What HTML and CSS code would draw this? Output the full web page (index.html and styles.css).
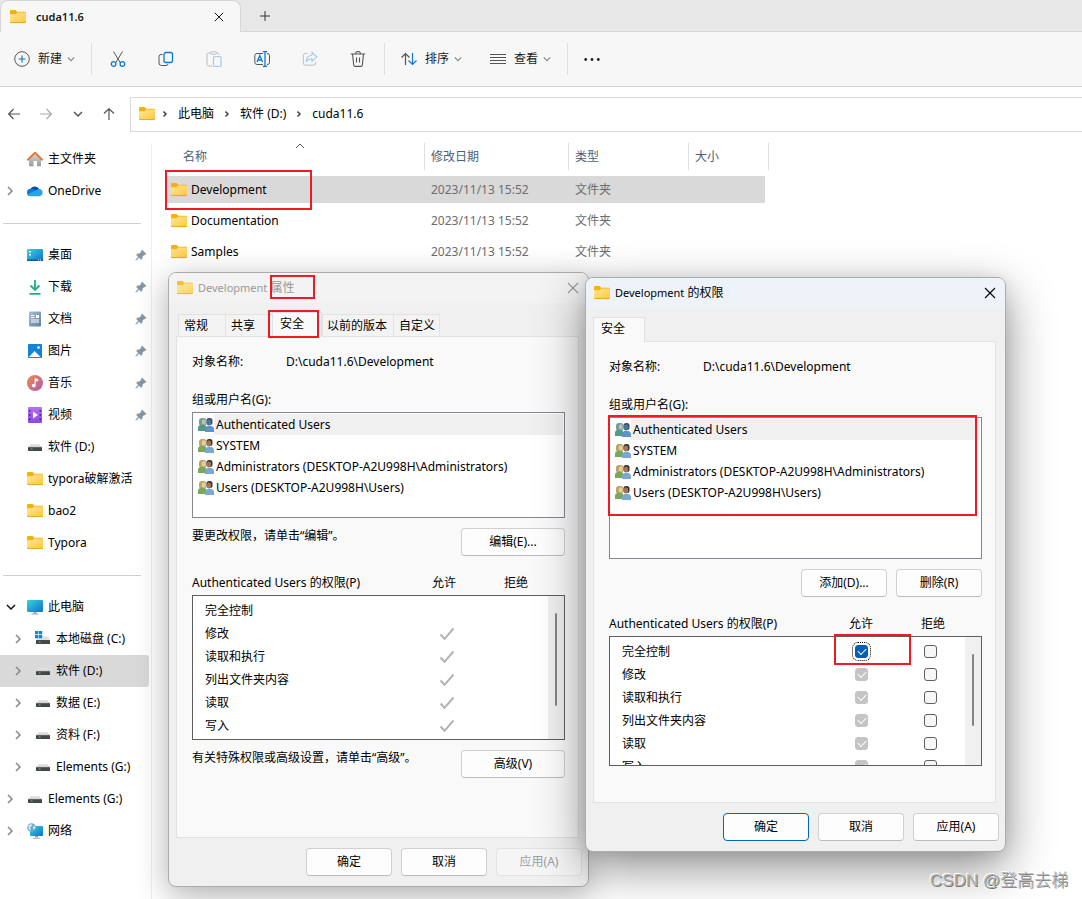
FILE: index.html
```html
<!DOCTYPE html>
<html lang="zh-CN">
<head>
<meta charset="utf-8">
<meta name="viewport" content="width=device-width, initial-scale=1">
<title>cuda11.6</title>
<link rel="stylesheet" href="styles.css">
</head>
<body>
<svg class="sprite" aria-hidden="true">
  <defs>
    <linearGradient id="gFolder" x1="0" y1="0" x2="1" y2="1"><stop offset="0" stop-color="#ffe69a"/><stop offset="1" stop-color="#fdc83c"/></linearGradient>
    <linearGradient id="gScreen" x1="0" y1="0" x2="1" y2="1"><stop offset="0" stop-color="#36d4dc"/><stop offset="1" stop-color="#1170cc"/></linearGradient>
    <linearGradient id="gDoc" x1="0" y1="0" x2="1" y2="1"><stop offset="0" stop-color="#a9bfd8"/><stop offset="1" stop-color="#5f80a3"/></linearGradient>
    <linearGradient id="gMusic" x1="0" y1="0" x2="1" y2="1"><stop offset="0" stop-color="#ee8a4c"/><stop offset="1" stop-color="#b35daa"/></linearGradient>
    <linearGradient id="gVideo" x1="0" y1="0" x2="0" y2="1"><stop offset="0" stop-color="#b672f5"/><stop offset="1" stop-color="#8a48e0"/></linearGradient>
    <linearGradient id="gHome" x1="0" y1="0" x2="0" y2="1"><stop offset="0" stop-color="#dadada"/><stop offset="1" stop-color="#9b9b9b"/></linearGradient>
  </defs>
  <symbol id="folder" viewBox="0 0 16 16">
    <path d="M0 2a1 1 0 0 1 1-1h4.600l1.600 1.800H15a1 1 0 0 1 1 1V7H0z" fill="#f5b010"/>
    <path d="M0 5.200h5.600l1.600-1.600h8a.8.8 0 0 1 .8.8v8.600a1 1 0 0 1-1 1H1a1 1 0 0 1-1-1z" fill="url(#gFolder)"/>
    <path d="M.2 12.900c.2.500.5.700 1 .7h13.600c.5 0 .8-.2 1-.7" fill="none" stroke="#e4a11c" stroke-width=".9"/>
  </symbol>
  <symbol id="chev-r" viewBox="0 0 8 10"><path d="M2 1l4 4-4 4" fill="none" stroke="currentColor" stroke-width="1.500"/></symbol>
  <symbol id="crumb" viewBox="0 0 8 10"><path d="M2.500 2.500L5 5 2.500 7.500" fill="none" stroke="currentColor" stroke-width="1.500"/></symbol>
  <symbol id="chev-d" viewBox="0 0 10 8"><path d="M1 2l4 4 4-4" fill="none" stroke="currentColor" stroke-width="1.500"/></symbol>
  <symbol id="cross" viewBox="0 0 12 12"><path d="M1 1l10 10M11 1L1 11" stroke="currentColor" stroke-width="1.100" fill="none"/></symbol>
  <symbol id="home" viewBox="0 0 16 16">
    <path d="M2 7.500L8 2l6 5.500V15.200H10V10H6.500v5.200H2z" fill="url(#gHome)"/>
    <path d="M.8 8.700L8 1.800l7.200 6.900" fill="none" stroke="#e8762c" stroke-width="1.900" stroke-linecap="round" stroke-linejoin="round"/>
  </symbol>
  <symbol id="cloud" viewBox="0 0 16 16">
    <path d="M3.200 6.500A5 5 0 0 1 12.200 6L8 10z" fill="#0a4faf"/>
    <path d="M3.600 5.800c1.400-.4 3 0 4.400 1l5.500 6.200H3.600A3.600 3.600 0 0 1 3.600 5.800z" fill="#0f78d6"/>
    <path d="M12.200 5.900A3.700 3.700 0 0 1 12.700 13.200H3.600c-1.300 0-2.400-.6-3-1.600L9 7.300c.8-.8 2-1.500 3.200-1.400z" fill="#27a4ea"/>
  </symbol>
  <symbol id="desktop" viewBox="0 0 16 16">
    <rect y="2" width="16" height="12" rx="1" fill="url(#gScreen)"/>
    <path d="M2 4h2v1.500H2zM2 7h2v1.500H2z" fill="#fff"/><path d="M0 12.500h16V14H0z" fill="#0c5aa0"/><path d="M11 13h1M13 13h1" stroke="#fff"/>
  </symbol>
  <symbol id="download" viewBox="0 0 16 16"><path d="M8 1v9.500M3.500 6.500L8 11l4.500-4.500M2.500 14.800h11" fill="none" stroke="#1fae86" stroke-width="1.800"/></symbol>
  <symbol id="doc" viewBox="0 0 16 16">
    <rect x="2" y=".5" width="12" height="15" rx="1" fill="url(#gDoc)"/>
    <path d="M4 4.500h3.500M4 6.500h3.500M4 9h8M4 11h8" stroke="#fff" stroke-width="1"/><path d="M9 4h3v3H9z" fill="#fff"/>
  </symbol>
  <symbol id="picture" viewBox="0 0 16 16">
    <rect x="1" y="1" width="14" height="14" rx="1" fill="#1583d3"/><path d="M2 14l5.500-6 6 6z" fill="#fff"/><circle cx="11.500" cy="4.500" r="1.300" fill="#fff"/>
  </symbol>
  <symbol id="music" viewBox="0 0 16 16">
    <circle cx="8" cy="8" r="8" fill="url(#gMusic)"/><path d="M8 10.500V3.500l2.800 1v1.500L8.800 5.500" fill="#fff" stroke="#fff" stroke-width=".8"/><circle cx="6.800" cy="10.600" r="1.900" fill="#fff"/>
  </symbol>
  <symbol id="video" viewBox="0 0 16 16">
    <rect x="1" y="0" width="14" height="16" rx="1" fill="url(#gVideo)"/><path d="M6 4.500l5 3.500-5 3.500z" fill="#fff"/>
    <path d="M2 3h1.500v1.500H2zM2 7.200h1.500v1.500H2zM2 11.500h1.500V13H2zM12.500 3H14v1.500h-1.500zM12.500 7.200H14v1.500h-1.500zM12.500 11.500H14V13h-1.500z" fill="#43207f"/>
  </symbol>
  <symbol id="drive" viewBox="0 0 16 16">
    <path d="M3.500 5h9l2.500 3.500H1z" fill="#e1e1e4"/><rect x="1" y="8" width="14" height="4" rx=".5" fill="#45484b"/><path d="M1 8.300h14" stroke="#77797c" stroke-width=".7"/><rect x="4" y="9.500" width="1.500" height="1" fill="#4fe34f"/>
  </symbol>
  <symbol id="windrive" viewBox="0 0 16 16">
    <path d="M4 5.500h9.500L15 9H1z" fill="#e1e1e4"/><rect x="1" y="9" width="14" height="4" rx=".5" fill="#45484b"/><rect x="4" y="10.500" width="1.500" height="1" fill="#4fe34f"/>
    <path d="M0 0h3.300v3.300H0zM3.900 0h3.300v3.300H3.900zM0 3.900h3.300v3.300H0zM3.900 3.900h3.300v3.300H3.900z" fill="#1483d8"/>
  </symbol>
  <symbol id="pc" viewBox="0 0 16 16">
    <rect y="1" width="16" height="12" rx="1" fill="url(#gScreen)"/><path d="M6.500 13h3v1.500h-3z" fill="#8fa5b5"/><path d="M4.500 15h7" stroke="#9dafbb" stroke-width="1.200"/>
  </symbol>
  <symbol id="network" viewBox="0 0 16 16">
    <rect x="3" y="3" width="13" height="10" rx="1" fill="url(#gScreen)"/><path d="M8 13h3v1.500H8z" fill="#8fa5b5"/><path d="M6 15.200h7" stroke="#9dafbb"/>
    <circle cx="4.500" cy="4.500" r="4.300" fill="#6fabd0"/><path d="M1.500 2.500Q4 .5 5.500 2L3 4.500l1 3L1.500 6zM6 4l2-1 .5 2-2 1.500z" fill="#d8edf5"/>
  </symbol>
  <symbol id="pin" viewBox="0 0 12 12"><path d="M7.200 1l3.900 3.900-1 .7-1.200.3L7.300 7.600l-.2 1.900-1 .9-2-2L1.300 11.200.8 10.700l2.700-2.800-2-2 .9-1 2-.2L6.200 3l.3-1.200z" fill="#8697a3" stroke="#8697a3" stroke-width=".6"/></symbol>
  <symbol id="users-g" viewBox="0 0 16 16">
    <rect x="1" y="1" width="7.500" height="8" rx="3" fill="#7c9494"/><ellipse cx="5.800" cy="5" rx="2.100" ry="2.800" fill="#b3c2bb"/><path d="M0 14V11c0-2.200 1.500-3.300 4.500-3.300S9 9.500 9 14z" fill="#4f9b85"/>
    <rect x="8.500" y="1" width="6" height="7" rx="2.500" fill="#3c4f68"/><ellipse cx="11" cy="5.500" rx="2.200" ry="2.900" fill="#49769b"/><path d="M7 15V12.500c0-2.500 1.500-3.700 4.500-3.700S16 10 16 12.500V15z" fill="#5c93cd"/>
  </symbol>
  <symbol id="users" viewBox="0 0 16 16">
    <rect x="1" y="1" width="7.500" height="8" rx="3" fill="#b5a565"/><ellipse cx="5.800" cy="5" rx="2.100" ry="2.800" fill="#efcaa1"/><path d="M0 14V11c0-2.200 1.500-3.300 4.500-3.300S9 9.500 9 14z" fill="#79a75b"/>
    <rect x="8.500" y="1" width="6" height="7" rx="2.500" fill="#39322e"/><ellipse cx="11" cy="5.500" rx="2.200" ry="2.900" fill="#a47753"/><path d="M7 15V12.500c0-2.500 1.500-3.700 4.500-3.700S16 10 16 12.500V15z" fill="#7ba7d6"/>
  </symbol>
  <symbol id="tick" viewBox="0 0 16 14"><path d="M1.500 7.500l4 4.300L14.500 1.500" fill="none" stroke="#b2b2b2" stroke-width="2"/></symbol>
</svg>

<div class="explorer">
  <header class="tabbar">
    <div class="tab">
      <svg class="i16"><use href="#folder"/></svg>
      <span class="tab-name">cuda11.6</span>
      <button class="plain tab-close" aria-label="关闭标签页"><svg class="i10"><use href="#cross"/></svg></button>
    </div>
    <button class="plain tab-new" aria-label="新建标签页"><svg class="i12" viewBox="0 0 12 12"><path d="M6 1v10M1 6h10" stroke="#333" fill="none"/></svg></button>
  </header>

  <div class="toolbar">
    <button class="plain cmd"><svg class="i16" viewBox="0 0 16 16"><circle cx="8" cy="8" r="7.300" fill="none" stroke="#555"/><path d="M8 4.500v7M4.500 8h7" stroke="#0f78d4" stroke-width="1.200"/></svg><span>新建</span><svg class="i8"><use href="#chev-d"/></svg></button>
    <span class="sep"></span>
    <div class="tools">
      <button class="plain tool" aria-label="剪切"><svg class="i16" viewBox="0 0 16 16"><path d="M3.500.5L10.500 12M12.500.5L5.500 12" stroke="#555" fill="none"/><g fill="none" stroke="#0f78d4" stroke-width="1.300"><circle cx="3.600" cy="13" r="2.300"/><circle cx="12.400" cy="13" r="2.300"/></g></svg></button>
      <button class="plain tool" aria-label="复制"><svg class="i16" viewBox="0 0 16 16"><path d="M4.500 3.500H3A2 2 0 0 0 1 5.500V12a2.500 2.500 0 0 0 2.500 2.500H8a2 2 0 0 0 2-1.500" fill="none" stroke="#555"/><rect x="6" y="1.500" width="8.500" height="10" rx="2" fill="none" stroke="#0f78d4" stroke-width="1.300"/></svg></button>
      <button class="plain tool" aria-label="粘贴"><svg class="i16" viewBox="0 0 16 16"><path d="M5 2H2.500A1.500 1.500 0 0 0 1 3.500v10A1.500 1.500 0 0 0 2.500 15H6M10.500 2h1A1.500 1.500 0 0 1 13 3.500V4" fill="none" stroke="#bdbdbd"/><rect x="4.500" y=".8" width="6" height="2.400" rx="1" fill="none" stroke="#bdbdbd"/><rect x="7.500" y="5.500" width="7.500" height="10" rx="1.200" fill="none" stroke="#9ccbf0" stroke-width="1.200"/></svg></button>
      <button class="plain tool" aria-label="重命名"><svg class="i16" viewBox="0 0 16 16"><path d="M9 2.500H3a2.200 2.200 0 0 0-2.200 2.200v6.600A2.200 2.200 0 0 0 3 13.500h6M13 2.500a2.200 2.200 0 0 1 2.500 2.200v6.600a2.200 2.200 0 0 1-2.500 2.200" fill="none" stroke="#555"/><path d="M3 11l2.800-6.500L8.500 11M4 9h3.700M11 .5v15M8.800.5h4.400M8.800 15.500h4.400" fill="none" stroke="#0f78d4" stroke-width="1.300"/></svg></button>
      <button class="plain tool" aria-label="共享"><svg class="i16" viewBox="0 0 16 16"><path d="M5.500 2.500H3.500A2.200 2.200 0 0 0 1.300 4.700V12a2.200 2.200 0 0 0 2.200 2.200h8a2.200 2.200 0 0 0 2.200-2.200v-1" fill="none" stroke="#bdbdbd"/><path d="M10 1.500l5 4.300-5 4.500V7.700C7.500 7.600 6 8.500 4.300 10.500 4.700 6.700 6.700 4.300 10 4z" fill="none" stroke="#9ccbf0" stroke-width="1.100"/></svg></button>
      <button class="plain tool" aria-label="删除"><svg class="i16" viewBox="0 0 16 16"><path d="M.8 3h14.400M5.500 3a2.500 2.500 0 0 1 5 0M2.500 3l1.200 11a1.500 1.500 0 0 0 1.500 1.400h5.600a1.500 1.500 0 0 0 1.500-1.400l1.200-11M6.500 6.500v5M9.500 6.500v5" fill="none" stroke="#555" stroke-width="1.100"/></svg></button>
    </div>
    <span class="sep"></span>
    <button class="plain cmd sort"><svg class="i16" viewBox="0 0 16 16"><path d="M4.500 14V2.500M.5 6.500l4-4 4 4" fill="none" stroke="#555" stroke-width="1.200"/><path d="M11.500 2v11.500M7.500 9.500l4 4 4-4" fill="none" stroke="#0f78d4" stroke-width="1.200"/></svg><span>排序</span><svg class="i8"><use href="#chev-d"/></svg></button>
    <button class="plain cmd"><svg class="i16" viewBox="0 0 16 16"><path d="M0 3.500h16M0 6.500h16M0 9.500h16M0 12.500h16" stroke="#555"/></svg><span>查看</span><svg class="i8"><use href="#chev-d"/></svg></button>
    <span class="sep"></span>
    <button class="plain more" aria-label="更多"><svg class="i16" viewBox="0 0 16 16"><g fill="#222"><circle cx="1.700" cy="8.500" r="1.400"/><circle cx="8" cy="8.500" r="1.400"/><circle cx="14.300" cy="8.500" r="1.400"/></g></svg></button>
  </div>

  <div class="address">
    <div class="history">
      <button class="plain" aria-label="后退"><svg class="i12" viewBox="0 0 12 12"><path d="M12 6H.8M5.500 1L.7 6l4.800 5" fill="none" stroke="#555" stroke-width="1.200"/></svg></button>
      <button class="plain" aria-label="前进"><svg class="i12" viewBox="0 0 12 12"><path d="M0 6h11.200M6.500 1l4.800 5-4.800 5" fill="none" stroke="#aaa" stroke-width="1.200"/></svg></button>
      <button class="plain" aria-label="最近"><svg class="i10"><use href="#chev-d"/></svg></button>
      <button class="plain" aria-label="向上"><svg class="i12" viewBox="0 0 12 12"><path d="M6 12V.8M1 5.500L6 .7l5 4.800" fill="none" stroke="#555" stroke-width="1.200"/></svg></button>
    </div>
    <nav class="crumbs" aria-label="路径">
      <svg class="i16"><use href="#folder"/></svg>
      <svg class="i8"><use href="#crumb"/></svg><a href="#">此电脑</a>
      <svg class="i8"><use href="#crumb"/></svg><a href="#">软件 (D:)</a>
      <svg class="i8"><use href="#crumb"/></svg><a href="#">cuda11.6</a>
    </nav>
  </div>

  <div class="main">
    <nav class="sidebar" aria-label="导航窗格">
      <a class="item" href="#"><span class="arrow"></span><svg class="i16"><use href="#home"/></svg><span>主文件夹</span></a>
      <a class="item" href="#"><span class="arrow"><svg class="i8"><use href="#chev-r"/></svg></span><svg class="i16"><use href="#cloud"/></svg><span>OneDrive</span></a>
      <hr>
      <a class="item" href="#"><span class="arrow"></span><svg class="i16"><use href="#desktop"/></svg><span>桌面</span><svg class="pin"><use href="#pin"/></svg></a>
      <a class="item" href="#"><span class="arrow"></span><svg class="i16"><use href="#download"/></svg><span>下载</span><svg class="pin"><use href="#pin"/></svg></a>
      <a class="item" href="#"><span class="arrow"></span><svg class="i16"><use href="#doc"/></svg><span>文档</span><svg class="pin"><use href="#pin"/></svg></a>
      <a class="item" href="#"><span class="arrow"></span><svg class="i16"><use href="#picture"/></svg><span>图片</span><svg class="pin"><use href="#pin"/></svg></a>
      <a class="item" href="#"><span class="arrow"></span><svg class="i16"><use href="#music"/></svg><span>音乐</span><svg class="pin"><use href="#pin"/></svg></a>
      <a class="item" href="#"><span class="arrow"></span><svg class="i16"><use href="#video"/></svg><span>视频</span><svg class="pin"><use href="#pin"/></svg></a>
      <a class="item" href="#"><span class="arrow"></span><svg class="i16"><use href="#drive"/></svg><span>软件 (D:)</span></a>
      <a class="item" href="#"><span class="arrow"></span><svg class="i16"><use href="#folder"/></svg><span>typora破解激活</span></a>
      <a class="item" href="#"><span class="arrow"></span><svg class="i16"><use href="#folder"/></svg><span>bao2</span></a>
      <a class="item" href="#"><span class="arrow"></span><svg class="i16"><use href="#folder"/></svg><span>Typora</span></a>
      <hr>
      <a class="item open" href="#"><span class="arrow"><svg class="i10"><use href="#chev-d"/></svg></span><svg class="i16"><use href="#pc"/></svg><span>此电脑</span></a>
      <a class="item sub" href="#"><span class="arrow"><svg class="i8"><use href="#chev-r"/></svg></span><svg class="i16"><use href="#windrive"/></svg><span>本地磁盘 (C:)</span></a>
      <a class="item sub selected" href="#"><span class="arrow"><svg class="i8"><use href="#chev-r"/></svg></span><svg class="i16"><use href="#drive"/></svg><span>软件 (D:)</span></a>
      <a class="item sub" href="#"><span class="arrow"><svg class="i8"><use href="#chev-r"/></svg></span><svg class="i16"><use href="#drive"/></svg><span>数据 (E:)</span></a>
      <a class="item sub" href="#"><span class="arrow"><svg class="i8"><use href="#chev-r"/></svg></span><svg class="i16"><use href="#drive"/></svg><span>资料 (F:)</span></a>
      <a class="item sub" href="#"><span class="arrow"><svg class="i8"><use href="#chev-r"/></svg></span><svg class="i16"><use href="#drive"/></svg><span>Elements (G:)</span></a>
      <a class="item" href="#"><span class="arrow"><svg class="i8"><use href="#chev-r"/></svg></span><svg class="i16"><use href="#drive"/></svg><span>Elements (G:)</span></a>
      <a class="item" href="#"><span class="arrow"><svg class="i8"><use href="#chev-r"/></svg></span><svg class="i16"><use href="#network"/></svg><span>网络</span></a>
    </nav>

    <main class="files">
      <table class="filelist">
        <thead>
          <tr><th class="c-name"><span>名称</span><svg class="sort-mark" viewBox="0 0 10 6"><path d="M1 5l4-4 4 4" fill="none" stroke="#555"/></svg></th><th class="c-date"><span>修改日期</span></th><th class="c-type"><span>类型</span></th><th class="c-size"><span>大小</span></th></tr>
        </thead>
        <tbody>
          <tr class="selected"><td><div class="fname"><svg class="i16"><use href="#folder"/></svg>Development</div></td><td>2023/11/13 15:52</td><td>文件夹</td><td></td></tr>
          <tr><td><div class="fname"><svg class="i16"><use href="#folder"/></svg>Documentation</div></td><td>2023/11/13 15:52</td><td>文件夹</td><td></td></tr>
          <tr><td><div class="fname"><svg class="i16"><use href="#folder"/></svg>Samples</div></td><td>2023/11/13 15:52</td><td>文件夹</td><td></td></tr>
        </tbody>
      </table>
      <span class="mark mark-file"></span>
    </main>
  </div>
</div>

<section class="dialog props" role="dialog" aria-label="Development 属性">
  <header class="titlebar"><svg class="i16"><use href="#folder"/></svg><h2><span class="latin">Development</span> 属性</h2><button class="plain" aria-label="关闭"><svg class="i12"><use href="#cross"/></svg></button></header>
  <div class="tabs">
    <button>常规</button><button>共享</button><button class="active">安全</button><button class="wide">以前的版本</button><button class="last">自定义</button>
  </div>
  <div class="panel">
    <div class="object"><span>对象名称:</span><span>D:\cuda11.6\Development</span></div>
    <p class="list-label">组或用户名(G):</p>
    <ul class="users">
      <li class="current"><svg class="i16"><use href="#users-g"/></svg><span>Authenticated Users</span></li>
      <li><svg class="i16"><use href="#users"/></svg><span>SYSTEM</span></li>
      <li><svg class="i16"><use href="#users"/></svg><span>Administrators (DESKTOP-A2U998H\Administrators)</span></li>
      <li><svg class="i16"><use href="#users"/></svg><span>Users (DESKTOP-A2U998H\Users)</span></li>
    </ul>
    <div class="note"><p>要更改权限，请单击“编辑”。</p><button class="btn long">编辑(E)...</button></div>
    <div class="perm-head"><span>Authenticated Users 的权限(P)</span><span>允许</span><span>拒绝</span></div>
    <div class="perm-box">
      <table class="perms">
        <tbody>
          <tr><th>完全控制</th><td></td><td></td></tr>
          <tr><th>修改</th><td><svg class="tick"><use href="#tick"/></svg></td><td></td></tr>
          <tr><th>读取和执行</th><td><svg class="tick"><use href="#tick"/></svg></td><td></td></tr>
          <tr><th>列出文件夹内容</th><td><svg class="tick"><use href="#tick"/></svg></td><td></td></tr>
          <tr><th>读取</th><td><svg class="tick"><use href="#tick"/></svg></td><td></td></tr>
          <tr><th>写入</th><td><svg class="tick"><use href="#tick"/></svg></td><td></td></tr>
        </tbody>
      </table>
      <div class="scroll"><span class="thumb"></span></div>
    </div>
    <div class="note"><p>有关特殊权限或高级设置，请单击“高级”。</p><button class="btn long">高级(V)</button></div>
  </div>
  <footer class="actions"><button class="btn">确定</button><button class="btn">取消</button><button class="btn" disabled>应用(A)</button></footer>
  <span class="mark mark-title"></span>
  <span class="mark mark-tab"></span>
</section>

<section class="dialog acl" role="dialog" aria-label="Development 的权限">
  <header class="titlebar"><svg class="i16"><use href="#folder"/></svg><h2><span class="latin">Development</span> 的权限</h2><button class="plain" aria-label="关闭"><svg class="i12"><use href="#cross"/></svg></button></header>
  <div class="tabs"><button class="active">安全</button></div>
  <div class="panel">
    <div class="object"><span>对象名称:</span><span>D:\cuda11.6\Development</span></div>
    <p class="list-label">组或用户名(G):</p>
    <ul class="users">
      <li class="current"><svg class="i16"><use href="#users-g"/></svg><span>Authenticated Users</span></li>
      <li><svg class="i16"><use href="#users"/></svg><span>SYSTEM</span></li>
      <li><svg class="i16"><use href="#users"/></svg><span>Administrators (DESKTOP-A2U998H\Administrators)</span></li>
      <li><svg class="i16"><use href="#users"/></svg><span>Users (DESKTOP-A2U998H\Users)</span></li>
    </ul>
    <div class="note edit"><button class="btn">添加(D)...</button><button class="btn">删除(R)</button></div>
    <div class="perm-head"><span>Authenticated Users 的权限(P)</span><span>允许</span><span>拒绝</span></div>
    <div class="perm-box">
      <table class="perms">
        <tbody>
          <tr><th>完全控制</th><td><input class="focused" type="checkbox" aria-label="完全控制 允许" checked></td><td><input type="checkbox" aria-label="完全控制 拒绝"></td></tr>
          <tr><th>修改</th><td><input type="checkbox" aria-label="修改 允许" checked disabled></td><td><input type="checkbox" aria-label="修改 拒绝"></td></tr>
          <tr><th>读取和执行</th><td><input type="checkbox" aria-label="读取和执行 允许" checked disabled></td><td><input type="checkbox" aria-label="读取和执行 拒绝"></td></tr>
          <tr><th>列出文件夹内容</th><td><input type="checkbox" aria-label="列出文件夹内容 允许" checked disabled></td><td><input type="checkbox" aria-label="列出文件夹内容 拒绝"></td></tr>
          <tr><th>读取</th><td><input type="checkbox" aria-label="读取 允许" checked disabled></td><td><input type="checkbox" aria-label="读取 拒绝"></td></tr>
          <tr><th>写入</th><td><input type="checkbox" aria-label="写入 允许" checked disabled></td><td><input type="checkbox" aria-label="写入 拒绝"></td></tr>
        </tbody>
      </table>
      <div class="scroll"><span class="thumb"></span></div>
    </div>
  </div>
  <footer class="actions"><button class="btn primary">确定</button><button class="btn">取消</button><button class="btn">应用(A)</button></footer>
  <span class="mark mark-users"></span>
  <span class="mark mark-allow"></span>
</section>

<div class="watermark">CSDN @登高去梯</div>
</body>
</html>
```

FILE: styles.css
```css
* { box-sizing: border-box; }
body {
  margin: 0;
  position: relative;
  min-height: 100vh;
  overflow: hidden;
  font: 12px/16px "Noto Sans", "Noto Sans CJK SC", sans-serif;
  color: #000;
  background: #fff;
}
a { color: inherit; text-decoration: none; }
p, h2, ul { margin: 0; padding: 0; }
button { font: inherit; color: inherit; }
svg { display: block; flex: none; }
.sprite { position: absolute; width: 0; height: 0; }
.i16 { width: 16px; height: 16px; }
.i12 { width: 12px; height: 12px; }
.i10 { width: 10px; height: 10px; }
.i8 { width: 8px; height: 10px; }
.plain {
  display: flex;
  align-items: center;
  justify-content: center;
  padding: 0;
  border: 0;
  background: none;
}

/* Window frame */
.explorer { display: flex; flex-direction: column; min-height: 100vh; }
.tabbar { display: flex; height: 32px; background: #e7e7e7; box-shadow: inset 0 -1px #d6d6d6; }
.tab {
  display: flex;
  align-items: center;
  width: 241px;
  padding: 0 16px 0 9px;
  background: #f7f7f7;
  border: 1px solid #d6d6d6;
  border-bottom: 0;
  border-radius: 8px 8px 0 0;
}
.tab-name { flex: 1; margin-left: 10px; font-size: 11px; font-weight: 600; color: #1a1a1a; }
.tab-new { width: 48px; }

.toolbar {
  display: flex;
  align-items: center;
  height: 55px;
  padding-left: 14px;
  background: #f7f7f7;
  border-bottom: 1px solid #d6d6d6;
}
.cmd { gap: 8px; color: #1a1a1a; }
.cmd .i8 { margin-left: -3px; color: #888; }
.cmd + .cmd { margin-left: 28px; }
.sep { width: 1px; height: 32px; margin: 0 0 0 16px; background: #e0e0e0; }
.tools { display: flex; margin-left: 2px; margin-right: -14px; }
.tool { width: 48px; height: 40px; }
.sort, .more { margin-left: 16px; }

.address { display: flex; padding-top: 10px; }
.history { display: flex; justify-content: space-between; width: 130px; padding: 0 15px 2px 8px; color: #555; }
.history button { flex: none; }
.crumbs {
  display: flex;
  flex: 1;
  align-items: center;
  gap: 9px;
  height: 35px;
  padding: 0 0 1px 8px;
  border: 1px solid #d9d9d9;
  border-right: 0;
}
.crumbs .i8 { color: #444; }
.crumbs .i16 { margin-right: -3px; }

.main { display: flex; flex: 1; padding-top: 11px; }
.sidebar { flex: none; width: 152px; border-right: 1px solid #efefef; }
.sidebar hr { width: 138px; height: 1px; margin: 16px 0 15px 3px; border: 0; background: #d0d0d0; }
.item {
  display: flex;
  align-items: center;
  gap: 5px;
  height: 32px;
  width: 149px;
  padding: 0 2px 0 6px;
  white-space: nowrap;
}
.sub { padding-left: 14px; }
.item.selected { background: #d9d9d9; border-radius: 0 3px 3px 0; }
.arrow { width: 16px; color: #888; }
.open .arrow { color: #111; }
.pin { width: 12px; height: 12px; margin-left: auto; }

/* File list */
.files { position: relative; flex: 1; padding-left: 15px; }
.filelist { width: 602px; border-collapse: separate; border-spacing: 0; table-layout: fixed; }
.filelist th { position: relative; height: 31px; padding: 0 0 4px; font-weight: 400; text-align: left; color: #4c607a; }
.filelist th span { display: block; height: 27px; padding-left: 6px; line-height: 27px; border-right: 1px solid #e0e0e0; }
.filelist .c-name span { padding-left: 16px; }
.c-name { width: 258px; }
.c-date { width: 144px; }
.c-type { width: 120px; }
.sort-mark { position: absolute; left: 128px; top: 0; width: 10px; height: 6px; }
.filelist td {
  height: 31px;
  padding: 0 0 0 6px;
  border: solid transparent;
  border-width: 2px 0;
  background-clip: padding-box;
  color: #6d6d6d;
}
.filelist td:first-child { padding-left: 4px; color: #000; }
.filelist td:last-child { border-right-width: 4px; }
.filelist .selected td { background-color: #d9d9d9; }
.fname { display: flex; align-items: center; gap: 4px; }

/* Dialogs */
.dialog {
  position: absolute;
  width: 421px;
  border: 1px solid #acacac;
  border-radius: 8px;
  background: #f0f0f0;
}
.props { left: 168px; top: 272px; box-shadow: 0 8px 32px rgba(0, 0, 0, .32); }
.acl { left: 585px; top: 277px; box-shadow: 0 16px 48px rgba(0, 0, 0, .44), 0 2px 16px rgba(0, 0, 0, .1); }
.titlebar {
  display: flex;
  align-items: center;
  gap: 5px;
  height: 30px;
  padding: 0 9px 0 8px;
  border-radius: 7px 7px 0 0;
  background: #f3f3f3;
}
.titlebar h2 { flex: 1; font-size: 12px; font-weight: 400; }
.titlebar .latin { font-size: 11px; }
.props .titlebar { color: #999; }
.props .titlebar .i16 { opacity: .8; }
.acl .titlebar { background: #eef3fa; }
.tabs { display: flex; align-items: flex-end; height: 34px; padding-left: 9px; margin-bottom: -1px; }
.tabs button {
  width: 47px;
  height: 23px;
  padding: 0 11px 0 5px;
  border: 1px solid #e2e2e2;
  border-right: 0;
  background: #f3f3f3;
  text-align: left;
  white-space: nowrap;
}
.tabs .active {
  position: relative;
  width: 52px;
  height: 25px;
  padding: 0 7px 3px 7px;
  border-right: 1px solid #e2e2e2;
  border-bottom: 0;
  background: #f9f9f9;
}
.props .tabs .active { width: 50px; }
.acl .tabs { padding-left: 7px; }
.tabs .wide { width: 71px; padding: 0 4px; }
.tabs .last { border-right: 1px solid #e2e2e2; }
.panel { margin: 0 9px 0 7px; padding: 17px 13px 0 15px; border: 1px solid #e2e2e2; background: #f9f9f9; }
.props .panel { padding-bottom: 59px; }
.acl .panel { padding-bottom: 36px; }
.object { display: grid; grid-template-columns: 94px 1fr; }
.list-label { margin: 22px 0 4px; }
.users { min-height: 106px; padding: 1px; border: 1px solid #828790; background: #fff; list-style: none; }
.acl .users { min-height: 142px; }
.users li { display: flex; align-items: center; height: 21px; padding-left: 4px; }
.users span { flex: 1; padding-left: 2px; line-height: 21px; }
.current span { background: #f0f0f0; }
.note { display: flex; justify-content: space-between; align-items: flex-start; margin-top: 10px; }
.note.edit { justify-content: flex-end; gap: 9px; }
.btn {
  width: 86px;
  height: 28px;
  padding: 0;
  border: 1px solid #d0d0d0;
  border-bottom-color: #bcbcbc;
  border-radius: 4px;
  background: #fdfdfd;
}
.btn.long { width: 104px; }
.btn:disabled { color: #9d9d9d; background: #f5f5f5; border-color: #e3e3e3; }
.btn.primary { border-color: #0067c0; }
.perm-head { display: grid; grid-template-columns: 216px 72px 72px; margin: 19px 0 4px; text-align: center; }
.perm-head span:first-child { text-align: left; }
.perm-box { display: flex; align-items: flex-start; height: 145px; border: 1px solid #5e5e5e; background: #fff; overflow: hidden; }
.acl .perm-box { height: 130px; }
.perms { flex: none; width: 355px; margin-top: 3px; border-collapse: collapse; table-layout: fixed; }
.perms th { width: 217px; height: 23px; padding: 0 0 0 12px; font-weight: 400; text-align: left; }
.perms td { width: 69px; height: 23px; padding: 0; }
.tick { width: 16px; height: 14px; margin: 0 auto; }
.props .perms td { padding-left: 4px; }
.scroll { flex: 1; align-self: stretch; padding: 17px 0 33px 7px; background: #f0f0f0; }
.thumb { display: block; width: 2px; height: 100%; border-radius: 1px; background: #858585; }
.acl .scroll { padding-bottom: 39px; }
input[type="checkbox"] {
  appearance: none;
  display: flex;
  align-items: center;
  justify-content: center;
  width: 13px;
  height: 13px;
  margin: 0 auto;
  border: 1px solid #5f5f5f;
  border-radius: 3px;
  background: #f6f6f6;
}
input[type="checkbox"]:checked { border-color: #005fb8; background: #005fb8; }
input[type="checkbox"]:checked:disabled { border-color: #c4c4c4; background: #c4c4c4; }
input[type="checkbox"]:checked::before {
  content: "";
  width: 7px;
  height: 4px;
  margin-bottom: 2px;
  border: solid #fff;
  border-width: 0 0 1px 1px;
  transform: rotate(-45deg);
}
input.focused { outline: 1px dotted #000; outline-offset: 2px; }
.actions { display: flex; justify-content: flex-end; gap: 9px; padding: 10px 6px; }

/* Red highlight frames */
.mark { position: absolute; border: 2px solid #ed1c24; pointer-events: none; }
.mark-file { left: 13px; top: 27px; width: 147px; height: 40px; }
.mark-title { left: 101px; top: 2px; width: 45px; height: 24px; }
.mark-tab { left: 99px; top: 37px; width: 51px; height: 28px; }
.mark-users { left: 22px; top: 137px; width: 369px; height: 101px; }
.mark-allow { left: 248px; top: 356px; width: 77px; height: 31px; }

.watermark {
  position: absolute;
  right: 14px;
  bottom: 6px;
  font-family: "Liberation Sans", "Noto Sans CJK SC", sans-serif;
  font-size: 17px;
  font-weight: 300;
  line-height: 24px;
  color: #b4b4b4;
  text-shadow: 1px 1px #777, -1px -1px #fff;
}
```
